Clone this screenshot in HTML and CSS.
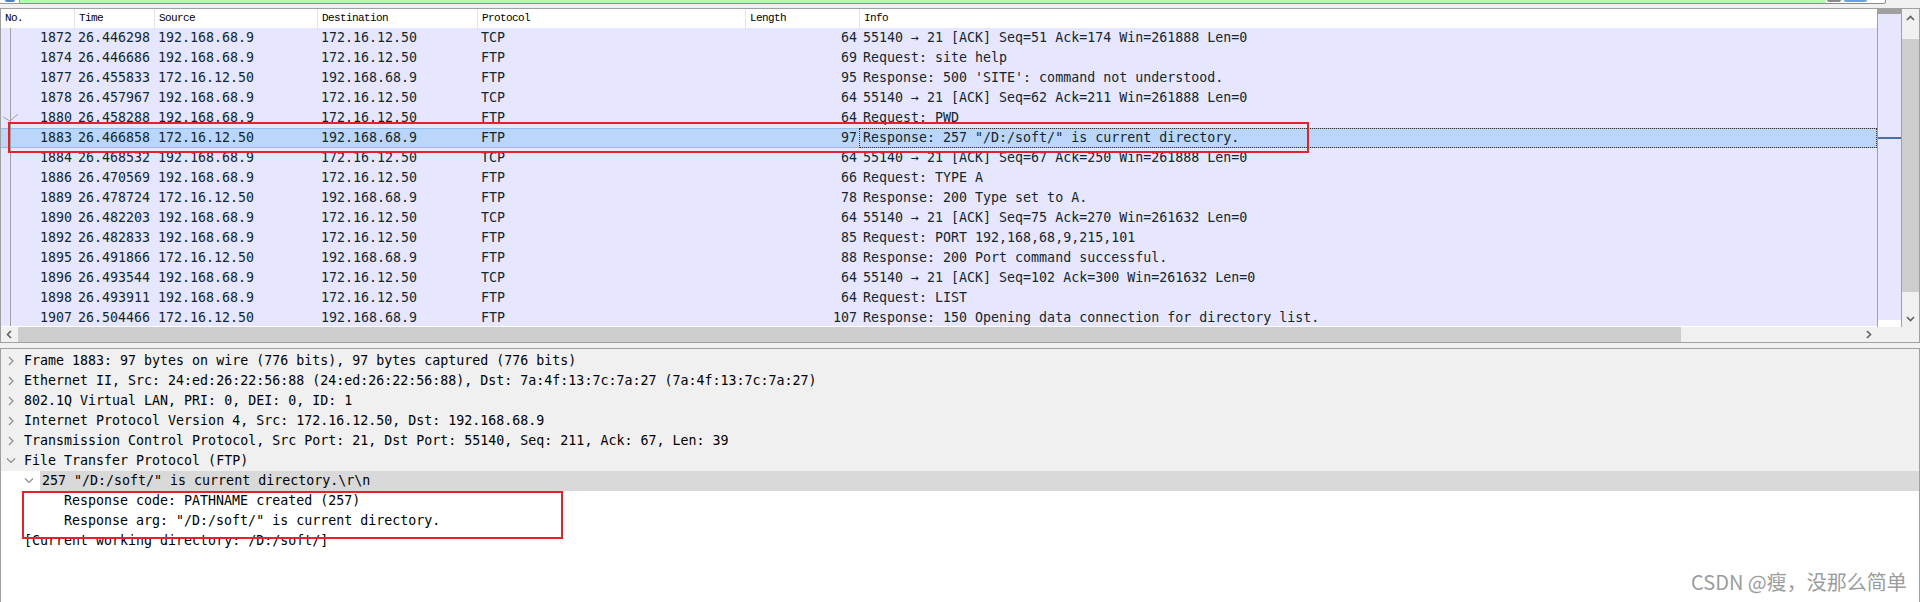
FILE: index.html
```html
<!DOCTYPE html>
<html lang="en">
<head>
<meta charset="utf-8">
<title>Wireshark FTP</title>
<link rel="stylesheet" href="styles.css">
</head>
<body>
<div class="toolbar">
  <div class="bm"><span class="bm-icon"></span></div>
  <div class="filter">
    <div class="filter-text"></div>
    <div class="filter-btns"><span class="fbtn grey"></span><span class="fbtn blue"></span></div>
  </div>
</div>

<div class="list-pane">
  <div class="list-body">
    <div class="table">
      <div class="hdr">
        <div class="c c-no">No.</div>
        <div class="c c-time">Time</div>
        <div class="c c-src">Source</div>
        <div class="c c-dst">Destination</div>
        <div class="c c-proto">Protocol</div>
        <div class="c c-len">Length</div>
        <div class="c c-info">Info</div>
      </div>
      <div class="rows">
        <div class="row"><div class="c c-no"><span class="rel"></span><span class="num">1872</span></div><div class="c c-time">26.446298</div><div class="c c-src">192.168.68.9</div><div class="c c-dst">172.16.12.50</div><div class="c c-proto">TCP</div><div class="c c-len">64</div><div class="c c-info">55140 → 21 [ACK] Seq=51 Ack=174 Win=261888 Len=0</div></div>
        <div class="row"><div class="c c-no"><span class="rel"></span><span class="num">1874</span></div><div class="c c-time">26.446686</div><div class="c c-src">192.168.68.9</div><div class="c c-dst">172.16.12.50</div><div class="c c-proto">FTP</div><div class="c c-len">69</div><div class="c c-info">Request: site help</div></div>
        <div class="row"><div class="c c-no"><span class="rel"></span><span class="num">1877</span></div><div class="c c-time">26.455833</div><div class="c c-src">172.16.12.50</div><div class="c c-dst">192.168.68.9</div><div class="c c-proto">FTP</div><div class="c c-len">95</div><div class="c c-info">Response: 500 'SITE': command not understood.</div></div>
        <div class="row"><div class="c c-no"><span class="rel"></span><span class="num">1878</span></div><div class="c c-time">26.457967</div><div class="c c-src">192.168.68.9</div><div class="c c-dst">172.16.12.50</div><div class="c c-proto">TCP</div><div class="c c-len">64</div><div class="c c-info">55140 → 21 [ACK] Seq=62 Ack=211 Win=261888 Len=0</div></div>
        <div class="row"><div class="c c-no"><span class="rel"><svg width="17" height="20" viewBox="0 0 17 20"><polyline points="1,9 8,13 16,6" fill="none" stroke="#a0a0a0" stroke-width="1"/></svg></span><span class="num">1880</span></div><div class="c c-time">26.458288</div><div class="c c-src">192.168.68.9</div><div class="c c-dst">172.16.12.50</div><div class="c c-proto">FTP</div><div class="c c-len">64</div><div class="c c-info">Request: PWD</div></div>
        <div class="row sel"><div class="c c-no"><span class="rel"></span><span class="num">1883</span></div><div class="c c-time">26.466858</div><div class="c c-src">172.16.12.50</div><div class="c c-dst">192.168.68.9</div><div class="c c-proto">FTP</div><div class="c c-len">97</div><div class="c c-info">Response: 257 "/D:/soft/" is current directory.</div></div>
        <div class="row"><div class="c c-no"><span class="rel"></span><span class="num">1884</span></div><div class="c c-time">26.468532</div><div class="c c-src">192.168.68.9</div><div class="c c-dst">172.16.12.50</div><div class="c c-proto">TCP</div><div class="c c-len">64</div><div class="c c-info">55140 → 21 [ACK] Seq=67 Ack=250 Win=261888 Len=0</div></div>
        <div class="row"><div class="c c-no"><span class="rel"></span><span class="num">1886</span></div><div class="c c-time">26.470569</div><div class="c c-src">192.168.68.9</div><div class="c c-dst">172.16.12.50</div><div class="c c-proto">FTP</div><div class="c c-len">66</div><div class="c c-info">Request: TYPE A</div></div>
        <div class="row"><div class="c c-no"><span class="rel"></span><span class="num">1889</span></div><div class="c c-time">26.478724</div><div class="c c-src">172.16.12.50</div><div class="c c-dst">192.168.68.9</div><div class="c c-proto">FTP</div><div class="c c-len">78</div><div class="c c-info">Response: 200 Type set to A.</div></div>
        <div class="row"><div class="c c-no"><span class="rel"></span><span class="num">1890</span></div><div class="c c-time">26.482203</div><div class="c c-src">192.168.68.9</div><div class="c c-dst">172.16.12.50</div><div class="c c-proto">TCP</div><div class="c c-len">64</div><div class="c c-info">55140 → 21 [ACK] Seq=75 Ack=270 Win=261632 Len=0</div></div>
        <div class="row"><div class="c c-no"><span class="rel"></span><span class="num">1892</span></div><div class="c c-time">26.482833</div><div class="c c-src">192.168.68.9</div><div class="c c-dst">172.16.12.50</div><div class="c c-proto">FTP</div><div class="c c-len">85</div><div class="c c-info">Request: PORT 192,168,68,9,215,101</div></div>
        <div class="row"><div class="c c-no"><span class="rel"></span><span class="num">1895</span></div><div class="c c-time">26.491866</div><div class="c c-src">172.16.12.50</div><div class="c c-dst">192.168.68.9</div><div class="c c-proto">FTP</div><div class="c c-len">88</div><div class="c c-info">Response: 200 Port command successful.</div></div>
        <div class="row"><div class="c c-no"><span class="rel"></span><span class="num">1896</span></div><div class="c c-time">26.493544</div><div class="c c-src">192.168.68.9</div><div class="c c-dst">172.16.12.50</div><div class="c c-proto">TCP</div><div class="c c-len">64</div><div class="c c-info">55140 → 21 [ACK] Seq=102 Ack=300 Win=261632 Len=0</div></div>
        <div class="row"><div class="c c-no"><span class="rel"></span><span class="num">1898</span></div><div class="c c-time">26.493911</div><div class="c c-src">192.168.68.9</div><div class="c c-dst">172.16.12.50</div><div class="c c-proto">FTP</div><div class="c c-len">64</div><div class="c c-info">Request: LIST</div></div>
        <div class="row"><div class="c c-no"><span class="rel"></span><span class="num">1907</span></div><div class="c c-time">26.504466</div><div class="c c-src">172.16.12.50</div><div class="c c-dst">192.168.68.9</div><div class="c c-proto">FTP</div><div class="c c-len">107</div><div class="c c-info">Response: 150 Opening data connection for directory list.</div></div>
      </div>
    </div>
    <div class="minimap">
      <div class="mm-top"></div>
      <div class="mm-body"></div>
      <div class="mm-bottom"></div>
    </div>
    <div class="vscroll">
      <div class="sbtn"><svg width="17" height="17" viewBox="0 0 17 17"><path d="M5 11 L8.5 7.5 L12 11" fill="none" stroke="#606060" stroke-width="1.6"/></svg></div>
      <div class="vtrack"><div class="vthumb"></div></div>
      <div class="sbtn"><svg width="17" height="17" viewBox="0 0 17 17"><path d="M5 7 L8.5 10.5 L12 7" fill="none" stroke="#606060" stroke-width="1.6"/></svg></div>
    </div>
  </div>
  <div class="hscroll-row">
    <div class="hscroll">
      <div class="hbtn"><svg width="17" height="15" viewBox="0 0 17 15"><path d="M10 4 L6.5 7.5 L10 11" fill="none" stroke="#606060" stroke-width="1.6"/></svg></div>
      <div class="hthumb"></div>
      <div class="htrack"></div>
      <div class="hbtn"><svg width="17" height="15" viewBox="0 0 17 15"><path d="M7 4 L10.5 7.5 L7 11" fill="none" stroke="#606060" stroke-width="1.6"/></svg></div>
    </div>
    <div class="corner"></div>
  </div>
</div>

<div class="splitter"></div>

<div class="details">
  <div class="d-grey">
    <div class="drow d0"><span class="exp"><svg width="12" height="20" viewBox="0 0 12 20"><path d="M4 6 L8 10 L4 14" fill="none" stroke="#8c8c8c" stroke-width="1.2"/></svg></span><span class="dt">Frame 1883: 97 bytes on wire (776 bits), 97 bytes captured (776 bits)</span></div>
    <div class="drow d0"><span class="exp"><svg width="12" height="20" viewBox="0 0 12 20"><path d="M4 6 L8 10 L4 14" fill="none" stroke="#8c8c8c" stroke-width="1.2"/></svg></span><span class="dt">Ethernet II, Src: 24:ed:26:22:56:88 (24:ed:26:22:56:88), Dst: 7a:4f:13:7c:7a:27 (7a:4f:13:7c:7a:27)</span></div>
    <div class="drow d0"><span class="exp"><svg width="12" height="20" viewBox="0 0 12 20"><path d="M4 6 L8 10 L4 14" fill="none" stroke="#8c8c8c" stroke-width="1.2"/></svg></span><span class="dt">802.1Q Virtual LAN, PRI: 0, DEI: 0, ID: 1</span></div>
    <div class="drow d0"><span class="exp"><svg width="12" height="20" viewBox="0 0 12 20"><path d="M4 6 L8 10 L4 14" fill="none" stroke="#8c8c8c" stroke-width="1.2"/></svg></span><span class="dt">Internet Protocol Version 4, Src: 172.16.12.50, Dst: 192.168.68.9</span></div>
    <div class="drow d0"><span class="exp"><svg width="12" height="20" viewBox="0 0 12 20"><path d="M4 6 L8 10 L4 14" fill="none" stroke="#8c8c8c" stroke-width="1.2"/></svg></span><span class="dt">Transmission Control Protocol, Src Port: 21, Dst Port: 55140, Seq: 211, Ack: 67, Len: 39</span></div>
    <div class="drow d0"><span class="exp"><svg width="12" height="20" viewBox="0 0 12 20"><path d="M2 7.5 L6 11.5 L10 7.5" fill="none" stroke="#8c8c8c" stroke-width="1.2"/></svg></span><span class="dt">File Transfer Protocol (FTP)</span></div>
  </div>
  <div class="drow d1"><span class="exp"><svg width="12" height="20" viewBox="0 0 12 20"><path d="M2 7.5 L6 11.5 L10 7.5" fill="none" stroke="#8c8c8c" stroke-width="1.2"/></svg></span><span class="dt band">257 "/D:/soft/" is current directory.\r\n</span></div>
  <div class="drow d2"><span class="dt">Response code: PATHNAME created (257)</span></div>
  <div class="drow d2"><span class="dt">Response arg: "/D:/soft/" is current directory.</span></div>
  <div class="drow dleaf"><span class="dt">[Current working directory: /D:/soft/]</span></div>
</div>

<div class="annot annot-1"></div>
<div class="annot annot-2"></div>
<div class="watermark">CSDN @瘦，没那么简单</div>
</body>
</html>
```

FILE: styles.css
```css
* { box-sizing: border-box; margin: 0; padding: 0; }
html, body { width: 1920px; height: 602px; overflow: hidden; background: #f0f0f0; }
body { position: relative; font-family: "DejaVu Sans Mono", "Liberation Mono", monospace; }

/* filter toolbar (only its bottom edge is visible) */
.toolbar { display: flex; height: 4px; margin-bottom: 4px; }
.bm { width: 20px; background: #fdfdfd; border-right: 1px solid #9a9a9a; border-bottom: 1px solid #9a9a9a; display: flex; justify-content: center; }
.bm-icon { width: 10px; height: 2px; background: #4d7fc4; border-radius: 0 0 2px 2px; }
.filter { width: 1866px; display: flex; border-bottom: 1px solid #8c8c8c; border-right: 1px solid #8c8c8c; border-bottom-right-radius: 3px; overflow: hidden; }
.filter-text { flex: 1; background: #afffaf; }
.filter-btns { width: 59px; background: #fff; display: flex; gap: 3px; padding-left: 1px; }
.fbtn { display: block; height: 2px; border-radius: 0 0 2px 2px; }
.fbtn.grey { width: 14px; background: #8a8a8a; }
.fbtn.blue { width: 23px; background: #6d9fdc; }

/* packet list */
.list-pane { height: 335px; border: 1px solid #a0a0a0; display: flex; flex-direction: column; }
.list-body { height: 318px; display: flex; }
.table { width: 1876px; background: #fff; display: flex; flex-direction: column; }
.hdr { height: 19px; display: flex; background: #fff; font-family: "Liberation Mono", monospace; font-size: 11px; letter-spacing: -0.6px; line-height: 19px; color: #000; }
.hdr .c { padding-left: 4px; border-left: 1px solid #e3e3e3; }
.hdr .c-no { border-left: none; }
.hdr .c-len { text-align: left; padding-right: 0; }
.rows { height: 298px; overflow: hidden; }
.row { height: 20px; display: flex; background: #e7e6ff; color: #12272e; font-size: 13.3px; line-height: 20px; white-space: pre; }
.c { flex: none; overflow: hidden; white-space: pre; }
.c-no { width: 73px; }
.c-time { width: 80px; }
.c-src { width: 163px; }
.c-dst { width: 160px; }
.c-proto { width: 268px; }
.c-len { width: 114px; }
.c-info { width: 1018px; }
.row .c { padding-left: 4px; }
.row .c-no { display: flex; padding-left: 1px; padding-right: 2px; }
.row .c-len { text-align: right; padding-left: 0; padding-right: 2px; }
.rel { width: 17px; height: 20px; flex: none; display: block; background: linear-gradient(#a0a0a0, #a0a0a0) 8px 0 / 1px 100% no-repeat; }
.rel svg { display: block; }
.num { margin-left: auto; }
.row.sel { background: #bbd6fb; box-shadow: inset 0 1px 0 #93bdee, inset 0 -1px 0 #93bdee; }
.row.sel .c-info { outline: 1px dotted #333; outline-offset: -1px; }

.minimap { width: 25px; border-left: 1px solid #a0a0a0; border-right: 1px solid #a0a0a0; display: flex; flex-direction: column; }
.mm-top { height: 5px; background: #a0a0a0; }
.mm-body { flex: 1; background: linear-gradient(#4a6fa8, #4a6fa8) 0 123px / 100% 2px no-repeat, #e7e6ff; }
.mm-bottom { height: 7px; background: #fff; }

.vscroll { width: 17px; display: flex; flex-direction: column; background: #f0f0f0; }
.sbtn { height: 17px; }
.sbtn svg { display: block; }
.vtrack { flex: 1; padding-top: 13px; }
.vthumb { height: 253px; background: #cdcdcd; }

.hscroll-row { height: 15px; display: flex; }
.hscroll { width: 1876px; display: flex; background: #f0f0f0; }
.hbtn { width: 17px; flex: none; }
.hbtn svg { display: block; }
.hthumb { width: 1663px; background: #cdcdcd; }
.htrack { flex: 1; }
.corner { flex: 1; background: #f0f0f0; }

.splitter { height: 5px; }

/* packet details */
.details { height: 254px; border: 1px solid #a0a0a0; border-bottom: none; background: #fff; color: #000; font-size: 13.3px; }
.d-grey { background: #f0f0f0; padding-top: 2px; }
.drow { height: 20px; display: flex; line-height: 20px; white-space: pre; }
.exp { width: 12px; height: 20px; flex: none; }
.exp svg { display: block; }
.dt { margin-left: 7px; }
.d0 { padding-left: 4px; }
.d1 { padding-left: 22px; }
.d2 { padding-left: 56px; }
.dleaf { padding-left: 16px; }
.dt.band { flex: 1; margin-left: 5px; padding-left: 2px; background: #d9d9d9; }

/* annotations drawn over the screenshot */
.annot { position: absolute; border: 2px solid #e3222b; }
.annot-1 { left: 8px; top: 122px; width: 1301px; height: 31px; }
.annot-2 { left: 22px; top: 491px; width: 541px; height: 48px; }

.watermark { position: absolute; left: 1691px; top: 570px; font-family: "Noto Sans CJK SC", "Liberation Sans", sans-serif; font-size: 20px; line-height: 24px; color: #9c9c9c; text-shadow: 0 0 1px #ffffff; white-space: nowrap; }
```
